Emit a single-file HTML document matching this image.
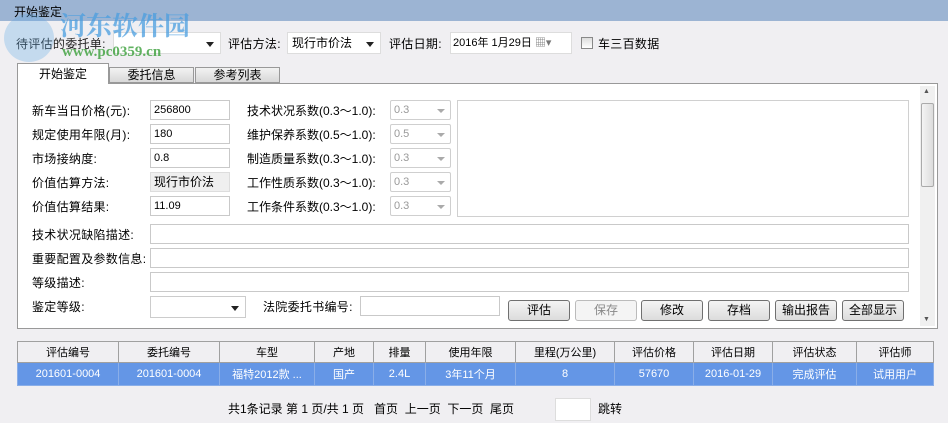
<!DOCTYPE html>
<html><head><meta charset="utf-8"><style>
*{box-sizing:border-box;margin:0;padding:0}
body{width:948px;height:423px;overflow:hidden;background:#f0eff2;font-family:"Liberation Sans","Noto Sans CJK SC","WenQuanYi Zen Hei",sans-serif;font-size:12px;color:#000;position:relative}
.a{position:absolute;white-space:nowrap}
.lb{letter-spacing:0.3px}
.in{position:absolute;background:#fff;border:1px solid #c9c9c9;height:20px;line-height:18px;padding-left:3px;font-size:11px}
.cb{position:absolute;background:#fff;border:1px solid #cfcfcf;border-radius:2px;height:20px;line-height:18px;padding-left:3px;color:#999;font-size:11px}
.cb:after{content:"";position:absolute;right:5px;top:8px;border:4px solid transparent;border-top:4px solid #aaa}
.dd{position:absolute;background:#fff;border:1px solid #ddd;height:22px;line-height:20px;padding-left:4px}
.dd:after{content:"";position:absolute;right:6px;top:9px;border:4px solid transparent;border-top:5px solid #222}
.btn{position:absolute;top:300px;width:62px;height:21px;border:1px solid #707070;border-radius:3px;background:linear-gradient(#f4f4f4,#dcdcdc);text-align:center;line-height:19px;font-size:12px}
table{position:absolute;left:17px;top:341px;width:915px;border-collapse:collapse;font-size:11px;table-layout:fixed}
td{border:1px solid #a0a0a0;text-align:center;height:21px}
tr.h td{background:#f0eff2}
tr.s td{background:#6496e6;color:#fff;height:23px;border-color:#8aaee8}
.wm{z-index:5}
</style></head><body>
<div class="a" style="left:0;top:0;width:948px;height:21px;background:#9cb4d3"></div>
<div class="a" style="left:14px;top:3px;font-size:12px">开始鉴定</div>
<div class="a lb" style="left:16px;top:35px;color:#222">待评估的委托单:</div>
<div class="dd" style="left:113px;top:32px;width:108px"></div>
<div class="a wm" style="left:4px;top:14px;width:50px;height:48px;border-radius:50%;background:#5fa8e6;opacity:.3"></div>
<div class="a wm" style="left:60px;top:6px;font-size:26px;font-weight:bold;color:#4a9ee0;opacity:.75;font-family:'Noto Serif CJK SC',serif">河东软件园</div>
<div class="a wm" style="left:62px;top:44px;font-size:15px;font-weight:bold;color:#3aa03a;opacity:.8;font-family:'Liberation Serif',serif">www.pc0359.cn</div>
<div class="a lb" style="left:228px;top:35px">评估方法:</div>
<div class="dd" style="left:287px;top:32px;width:94px">现行市价法</div>
<div class="a lb" style="left:389px;top:35px">评估日期:</div>
<div class="a" style="left:450px;top:32px;width:122px;height:22px;background:#fff;border:1px solid #ddd;line-height:20px;padding-left:2px;font-size:11px">2016年 1月29日 <span style="color:#777">▦▾</span></div>
<div class="a" style="left:581px;top:37px;width:12px;height:12px;border:1px solid #888;background:linear-gradient(#ddd,#fff)"></div>
<div class="a lb" style="left:598px;top:35px">车三百数据</div>
<div class="a" style="left:17px;top:63px;width:92px;height:21px;background:#fff;border:1px solid #999;border-bottom:none;z-index:2;text-align:center;line-height:20px">开始鉴定</div>
<div class="a" style="left:109px;top:67px;width:85px;height:16px;background:linear-gradient(#f2f2f2,#d8d8d8);border:1px solid #999;text-align:center;line-height:15px">委托信息</div>
<div class="a" style="left:195px;top:67px;width:85px;height:16px;background:linear-gradient(#f2f2f2,#d8d8d8);border:1px solid #999;text-align:center;line-height:15px">参考列表</div>
<div class="a" style="left:17px;top:83px;width:921px;height:246px;background:#fff;border:1px solid #999"></div>
<div class="a" style="left:920px;top:86px;width:15px;height:240px;background:#f0f0f0"></div>
<div class="a" style="left:921px;top:103px;width:13px;height:84px;border:1px solid #aaa;border-radius:2px;background:linear-gradient(90deg,#f4f4f4,#dcdcdc)"></div>
<div class="a" style="left:923px;top:88px;font-size:7px;color:#555">▲</div>
<div class="a" style="left:923px;top:316px;font-size:7px;color:#555">▼</div>
<div class="a lb" style="left:32px;top:102px">新车当日价格(元):</div>
<div class="a lb" style="left:32px;top:126px">规定使用年限(月):</div>
<div class="a lb" style="left:32px;top:150px">市场接纳度:</div>
<div class="a lb" style="left:32px;top:174px">价值估算方法:</div>
<div class="a lb" style="left:32px;top:198px">价值估算结果:</div>
<div class="in" style="left:150px;top:100px;width:80px">256800</div>
<div class="in" style="left:150px;top:124px;width:80px">180</div>
<div class="in" style="left:150px;top:148px;width:80px">0.8</div>
<div class="in" style="left:150px;top:172px;width:80px;background:#efefef;border-color:#ddd;font-size:12px">现行市价法</div>
<div class="in" style="left:150px;top:196px;width:80px">11.09</div>
<div class="a" style="left:247px;top:102px">技术状况系数(0.3～1.0):</div>
<div class="a" style="left:247px;top:126px">维护保养系数(0.5～1.0):</div>
<div class="a" style="left:247px;top:150px">制造质量系数(0.3～1.0):</div>
<div class="a" style="left:247px;top:174px">工作性质系数(0.3～1.0):</div>
<div class="a" style="left:247px;top:198px">工作条件系数(0.3～1.0):</div>
<div class="cb" style="left:390px;top:100px;width:61px">0.3</div>
<div class="cb" style="left:390px;top:124px;width:61px">0.5</div>
<div class="cb" style="left:390px;top:148px;width:61px">0.3</div>
<div class="cb" style="left:390px;top:172px;width:61px">0.3</div>
<div class="cb" style="left:390px;top:196px;width:61px">0.3</div>
<div class="a" style="left:457px;top:100px;width:452px;height:117px;border:1px solid #d0d0d0"></div>
<div class="a lb" style="left:32px;top:226px">技术状况缺陷描述:</div>
<div class="a lb" style="left:32px;top:250px">重要配置及参数信息:</div>
<div class="a lb" style="left:32px;top:274px">等级描述:</div>
<div class="a lb" style="left:32px;top:298px">鉴定等级:</div>
<div class="in" style="left:150px;top:224px;width:759px"></div>
<div class="in" style="left:150px;top:248px;width:759px"></div>
<div class="in" style="left:150px;top:272px;width:759px"></div>
<div class="dd" style="left:150px;top:296px;width:96px;border-color:#ccc"></div>
<div class="a lb" style="left:263px;top:298px">法院委托书编号:</div>
<div class="in" style="left:360px;top:296px;width:140px"></div>
<div class="btn" style="left:508px">评估</div>
<div class="btn" style="left:575px;border-color:#bbb;color:#888;background:#f4f4f4">保存</div>
<div class="btn" style="left:641px">修改</div>
<div class="btn" style="left:708px">存档</div>
<div class="btn" style="left:775px">输出报告</div>
<div class="btn" style="left:842px">全部显示</div>
<table>
<colgroup><col style="width:101px"><col style="width:101px"><col style="width:95px"><col style="width:59px"><col style="width:52px"><col style="width:90px"><col style="width:99px"><col style="width:79px"><col style="width:79px"><col style="width:84px"><col style="width:77px"></colgroup>
<tr class="h"><td>评估编号</td><td>委托编号</td><td>车型</td><td>产地</td><td>排量</td><td>使用年限</td><td>里程(万公里)</td><td>评估价格</td><td>评估日期</td><td>评估状态</td><td>评估师</td></tr>
<tr class="s"><td>201601-0004</td><td>201601-0004</td><td>福特2012款 ...</td><td>国产</td><td>2.4L</td><td>3年11个月</td><td>8</td><td>57670</td><td>2016-01-29</td><td>完成评估</td><td>试用用户</td></tr>
</table>
<div class="a" style="left:228px;top:400px">共1条记录 第 1 页/共 1 页 &nbsp; 首页 &nbsp;上一页 &nbsp;下一页 &nbsp;尾页</div>
<div class="a" style="left:555px;top:398px;width:36px;height:23px;background:#fff;border:1px solid #ddd"></div>
<div class="a" style="left:598px;top:400px">跳转</div>
</body></html>
